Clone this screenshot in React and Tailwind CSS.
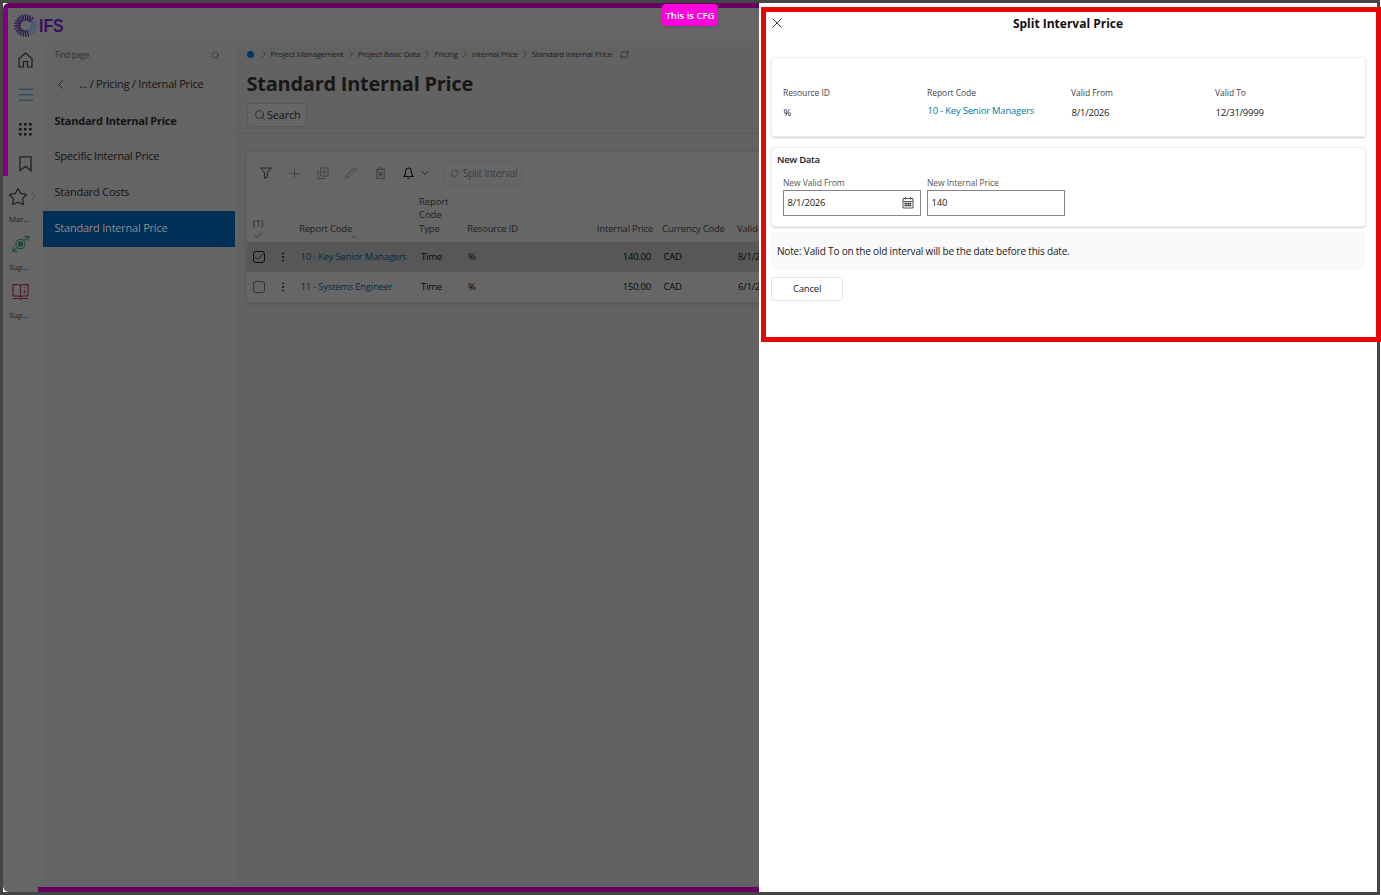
import React from "react";
import {
  Check,
  ChevronDown,
  ChevronLeft,
  ChevronRight,
  ChevronUp,
  EllipsisVertical,
  Pencil,
  Plus,
  RefreshCw,
  Search,
  Star,
  X,
} from "lucide-react";

const crumbs = [
  "Project Management",
  "Project Basic Data",
  "Pricing",
  "Internal Price",
  "Standard Internal Price",
];

const rows = [
  { code: "10 - Key Senior Managers", type: "Time", resource: "%", price: "140.00", currency: "CAD", valid: "8/1/2", checked: true },
  { code: "11 - Systems Engineer", type: "Time", resource: "%", price: "150.00", currency: "CAD", valid: "6/1/2", checked: false },
];

const details = [
  { label: "Resource ID", value: "%" },
  { label: "Report Code", value: "10 - Key Senior Managers", link: true },
  { label: "Valid From", value: "8/1/2026" },
  { label: "Valid To", value: "12/31/9999" },
];

const rays = Array.from({ length: 24 }, (_, i) => i * 15);

function Logo() {
  return (
    <div className="flex h-[33px] items-center pt-[1px] pl-[6px]">
      <svg width="23" height="23" viewBox="0 0 24 24" fill="none">
        {rays.map((deg) => (
          <path
            key={deg}
            d="M12 6.8 Q12.8 4 11.2 0.2"
            stroke={deg > 50 && deg < 160 ? "#41567f" : "#2e1553"}
            strokeWidth="1.4"
            transform={`rotate(${deg} 12 12)`}
          />
        ))}
      </svg>
      <span className="ml-[1.5px] origin-left scale-x-[.83] pt-[1px] font-['Liberation_Sans',sans-serif] text-[19px] leading-none font-bold text-[#3a1060]">
        IFS
      </span>
    </div>
  );
}

function HomeIcon() {
  return (
    <svg width="15" height="16" viewBox="0 0 15 16" fill="none" stroke="#1c1c1c" strokeWidth="1.2">
      <path d="M1 6.5 7.5 1 14 6.5V15H9.5V9.5H5.5V15H1Z" />
    </svg>
  );
}

function MenuIcon() {
  return (
    <svg width="14" height="13" viewBox="0 0 14 13" fill="#2a4d68">
      <rect y="0.6" width="14" height="1.4" />
      <rect y="6" width="14" height="1.4" />
      <rect y="11.6" width="14" height="1.4" />
    </svg>
  );
}

function GridIcon() {
  const dots = [0, 5, 10];
  return (
    <svg width="13" height="13" viewBox="0 0 13 13" fill="#151515">
      {dots.map((y) => dots.map((x) => <rect key={`${x}-${y}`} x={x} y={y} width="2.6" height="2.6" rx="0.6" />))}
    </svg>
  );
}

function BookmarkIcon() {
  return (
    <svg width="13" height="16" viewBox="0 0 13 16" fill="none" stroke="#1c1c1c" strokeWidth="1.2">
      <path d="M1 .8h11v14L6.5 10.3 1 14.8Z" />
    </svg>
  );
}

function TargetIcon() {
  return (
    <svg width="18" height="18" viewBox="0 0 18 18" fill="none" stroke="#1d4a35" strokeWidth="1.1">
      <circle cx="8.5" cy="9" r="4.6" />
      <circle cx="8.5" cy="9" r="2.1" fill="#1d4a35" />
      <path d="M12 5.5 16.5 1.5M12 1.5h4.5V6M5 12.5 1 16.5M1 12v4.5h4.5" />
    </svg>
  );
}

function GuideIcon() {
  return (
    <svg width="17" height="17" viewBox="0 0 17 17" fill="none" stroke="#50142b" strokeWidth="1.1">
      <path d="M8.5 2.5C7.5 1.5 6 1.5 1 1.5V13h6l1.5 1 1.5-1h6V1.5C11 1.5 9.5 1.5 8.5 2.5V13M1 15.5h6l1.5.8 1.5-.8h6M12.3 6.5V10.5M12.3 4v1" />
    </svg>
  );
}

function FilterIcon() {
  return (
    <svg width="12" height="12" viewBox="0 0 12 12" fill="none" stroke="#1c1c1c" strokeWidth=".9">
      <path d="M.8 1h10.4L7.4 6v4L4.6 11.3V6Z" />
    </svg>
  );
}

function DuplicateIcon() {
  return (
    <svg width="12" height="12" viewBox="0 0 12 12" fill="none" stroke="currentColor" strokeWidth=".8" className="ml-[15px]">
      <path d="M3.5 1h7.5v8H3.5ZM1 3v8.5h8M7.25 3v4M5.3 5h3.9" />
    </svg>
  );
}

function TrashIcon() {
  return (
    <svg width="11" height="12" viewBox="0 0 11 12" fill="none" stroke="currentColor" strokeWidth=".8" className="ml-[18px]">
      <path d="M.5 2.5h10M3.5 2.5V1h4v1.5M1.7 2.5v9h7.6v-9M4 4.5v5M5.5 4.5v5M7 4.5v5" />
    </svg>
  );
}

function BellIcon() {
  return (
    <svg width="11" height="12" viewBox="0 0 11 12" fill="none" stroke="#101010" strokeWidth="1.1" className="ml-[17px]">
      <path d="M1 9.5C2.5 8 2.7 6.5 2.7 4.2 2.7 2 3.8 1 5.5 1S8.3 2 8.3 4.2C8.3 6.5 8.5 8 10 9.5ZM4.3 11.3h2.4" />
    </svg>
  );
}

function CalendarIcon() {
  return (
    <svg width="12" height="12" viewBox="0 0 12 12" fill="none" stroke="#555" strokeWidth="1">
      <path d="M1 1.5h10v9.5H1ZM1 4.5h10M3.5 0v2.5M8.5 0v2.5" />
      <path d="M2.5 6.5h7M2.5 8.5h7" strokeDasharray="1.4 .3" strokeWidth="1.6" stroke="#222" />
    </svg>
  );
}

function Rail() {
  return (
    <div className="flex w-[35px] shrink-0 flex-col pt-[1px]">
      <div className="flex h-[35px] items-center justify-center"><HomeIcon /></div>
      <div className="flex h-[35px] items-center justify-center"><MenuIcon /></div>
      <div className="flex h-[34px] items-center justify-center"><GridIcon /></div>
      <div className="flex h-[35px] items-center justify-center"><BookmarkIcon /></div>
      <div className="flex h-[28px] items-center pt-[3px]">
        <Star size={20} strokeWidth={1.4} color="#1c1c1c" className="shrink-0" />
        <ChevronRight size={13} strokeWidth={1.2} color="#333" className="-ml-[1px] shrink-0" />
      </div>
      <span className="mt-[3px] ml-[1px] text-[8px] leading-[14px] tracking-[-0.1px] text-[#1c1c1c]">Mar...</span>
      <div className="mt-[9px] ml-[4px] h-[18px]"><TargetIcon /></div>
      <span className="mt-[7px] ml-[1px] text-[8px] leading-[14px] tracking-[-0.1px] text-[#1c1c1c]">Sup...</span>
      <div className="mt-[9px] ml-[4px] h-[18px]"><GuideIcon /></div>
      <span className="mt-[7px] ml-[1px] text-[8px] leading-[14px] tracking-[-0.1px] text-[#1c1c1c]">Sup...</span>
    </div>
  );
}

function Sidebar() {
  return (
    <div className="w-[192px] shrink-0 bg-[#646464] pt-[1px] text-[11px] tracking-[-0.22px] text-[#141414]">
      <div className="flex h-[25px] items-center justify-between pt-[1px] pr-[15px] pl-[12px] text-[8.5px] text-[#333]">
        <span className="tracking-[-0.5px]">Find page</span>
        <Search size={9} strokeWidth={1.8} />
      </div>
      <div className="flex h-[34px] items-center pl-[10px]">
        <ChevronLeft size={15} strokeWidth={1.4} />
        <span className="ml-[11px]">... / Pricing / Internal Price</span>
      </div>
      <div className="flex h-[38px] items-center pt-[2px] pl-[11.5px] font-bold tracking-[-0.25px]">Standard Internal Price</div>
      <div className="flex h-[34px] items-center pl-[11.5px]">Specific Internal Price</div>
      <div className="flex h-[38px] items-center pl-[11.5px]">Standard Costs</div>
      <div className="flex h-[36px] items-center bg-[#002f57] pb-[2px] pl-[11.5px] text-[#8d8d8d]">Standard Internal Price</div>
    </div>
  );
}

function Toolbar() {
  return (
    <div className="flex h-[42px] items-center pl-[13px] text-[#393939]">
      <FilterIcon />
      <Plus size={15} strokeWidth={1.1} className="ml-[15px]" />
      <DuplicateIcon />
      <Pencil size={12} strokeWidth={1.4} className="ml-[16px]" />
      <TrashIcon />
      <BellIcon />
      <ChevronDown size={12} strokeWidth={1.6} color="#101010" className="ml-[5px]" />
      <div className="ml-[12px] flex h-[24px] w-[79px] items-center gap-[4px] rounded-sm border border-[#606060] pl-[6px] text-[10px] tracking-[-0.28px] whitespace-nowrap text-[#3c3c3c]">
        <RefreshCw size={9} strokeWidth={1.5} />
        Split Interval
      </div>
    </div>
  );
}

function PriceTable() {
  return (
    <div className="rounded-l border-y border-l border-[#5e5e5e] bg-[#666] shadow-sm">
      <Toolbar />
      <div className="flex h-[48px] items-end pb-[7px] text-[9.5px] leading-[13.5px] tracking-[-0.2px] whitespace-nowrap text-[#1f1f1f]">
        <div className="-mb-[6px] w-[52px] pl-[6px] text-[9px] leading-[12px]">
          (1)
          <Check size={11} strokeWidth={1.3} />
        </div>
        <div className="relative w-[120px]">
          Report Code
          <ChevronUp size={10} strokeWidth={1.5} className="absolute -bottom-[7px] left-[50px]" />
        </div>
        <div className="w-[48px] tracking-[-0.1px]">Report<br />Code<br />Type</div>
        <div className="w-[96px]">Resource ID</div>
        <div className="w-[90px] text-right">Internal Price</div>
        <div className="w-[75px] pl-[9px]">Currency Code</div>
        <div className="pl-[9px]">Valid</div>
      </div>
      {rows.map((row) => (
        <div
          key={row.code}
          className={`flex h-[30px] items-center text-[9.5px] tracking-[-0.24px] whitespace-nowrap text-[#080808] ${row.checked ? "bg-[#575757]" : ""}`}
        >
          <div className="flex w-[53.5px] shrink-0 items-center pl-[6px]">
            <div className={`flex h-[12px] w-[12px] items-center justify-center rounded-[3px] border ${row.checked ? "border-[#0c0c0c]" : "border-[#333]"}`}>
              {row.checked && <Check size={12} strokeWidth={1.5} className="shrink-0" />}
            </div>
            <EllipsisVertical size={12} strokeWidth={2} className="ml-[12px]" />
          </div>
          <div className="w-[120.5px] shrink-0 text-[#062b45]">{row.code}</div>
          <div className="w-[47px] shrink-0">{row.type}</div>
          <div className="w-[95px] shrink-0">{row.resource}</div>
          <div className="w-[88px] shrink-0 text-right">{row.price}</div>
          <div className="w-[87px] shrink-0 pl-[12.5px]">{row.currency}</div>
          <div>{row.valid}</div>
        </div>
      ))}
    </div>
  );
}

function Main() {
  return (
    <div className="min-w-0 flex-1 overflow-hidden bg-[#626262] pt-[1px]">
      <div className="flex h-[24px] items-center gap-[1px] pl-[12px] text-[8px] tracking-[-0.25px] whitespace-nowrap text-[#202020]">
        <div className="mr-[2.5px] h-[7px] w-[7px] rounded-full bg-[#003761]" />
        {crumbs.map((name) => (
          <React.Fragment key={name}>
            <ChevronRight size={12} strokeWidth={1.3} className="shrink-0" />
            <span>{name}</span>
          </React.Fragment>
        ))}
        <RefreshCw size={9} strokeWidth={1.6} className="ml-[7px]" />
      </div>
      <h1 className="flex h-[35px] items-center pl-[11.5px] text-[20px] font-bold tracking-[-0.25px] text-[#171717]">
        Standard Internal Price
      </h1>
      <div className="mt-[2px] ml-[12px] flex h-[24px] w-[60px] items-center gap-[1px] rounded-sm border border-[#595959] bg-[#666] pl-[6px] text-[11px] tracking-[-0.2px] text-[#171717]">
        <Search size={12} strokeWidth={1.4} />
        Search
      </div>
      <div className="mt-[6px] mb-[17px] h-px bg-[#5b5b5b]" />
      <div className="pl-[11px]"><PriceTable /></div>
    </div>
  );
}

function SplitPanel() {
  return (
    <div className="w-[618px] shrink-0 bg-white pl-[12px] text-[#202020]">
      <div className="flex h-[41px] items-center">
        <X size={16} strokeWidth={1.3} className="mt-[-2px] -ml-[2px]" />
        <h2 className="w-[566px] text-center text-[12px] font-bold text-[#111]">Split Interval Price</h2>
      </div>
      <div className="mt-[13px] flex h-[80px] w-[595px] rounded border border-[#eee] pt-[29px] pl-[11px] shadow-[0_1px_2px_rgba(0,0,0,0.2)]">
        {details.map((item) => (
          <div key={item.label} className="w-[144px]">
            <div className="text-[8.5px] leading-[12px] tracking-[-0.05px] text-[#444]">{item.label}</div>
            <div className={`pl-[0.5px] text-[9.5px] leading-[14px] tracking-[-0.22px] whitespace-nowrap ${item.link ? "mt-[5px] text-[#007ba8]" : "mt-[7px]"}`}>
              {item.value}
            </div>
          </div>
        ))}
      </div>
      <div className="mt-[10px] h-[80px] w-[595px] rounded border border-[#eee] pl-[5px] shadow-[0_1px_2px_rgba(0,0,0,0.2)]">
        <div className="pt-[5px] text-[9.5px] leading-[14px] font-semibold tracking-[-0.25px]">New Data</div>
        <div className="mt-[9px] flex gap-[6px] pl-[6px]">
          <div className="w-[138px]">
            <div className="text-[8.5px] leading-[14px] tracking-[-0.05px] text-[#555]">New Valid From</div>
            <div className="flex h-[26px] items-center justify-between border border-[#858585] pr-[6px] pl-[3.5px] text-[9.5px] tracking-[-0.22px]">
              8/1/2026
              <CalendarIcon />
            </div>
          </div>
          <div className="w-[138px]">
            <div className="text-[8.5px] leading-[14px] tracking-[-0.05px] text-[#555]">New Internal Price</div>
            <div className="flex h-[26px] items-center border border-[#858585] pl-[3.5px] text-[9.5px] tracking-[-0.22px]">140</div>
          </div>
        </div>
      </div>
      <div className="mt-[5px] flex h-[38px] w-[594px] items-center bg-[#fafafa] pl-[6px] text-[10px] tracking-[-0.18px]">
        Note: Valid To on the old interval will be the date before this date.
      </div>
      <div className="mt-[7px] flex h-[24px] w-[72px] items-center justify-center rounded-[3px] border border-[#e4e4e4] pt-[1px] text-[9.5px] tracking-[-0.2px]">
        Cancel
      </div>
    </div>
  );
}

export default function App() {
  return (
    <div className="relative h-[895px] w-[1381px] overflow-hidden bg-white font-['Open_Sans',sans-serif]">
      <div className="flex h-[895px] w-[1380px] border-[3px] border-[#454545] bg-white">
        <div className="relative flex w-[756px] shrink-0 flex-col overflow-hidden rounded-tl-[6px] rounded-bl-[6px] border-t-[5px] border-[#650060] bg-[#666] pl-[5px]">
          <Logo />
          <div className="flex min-h-0 flex-1">
            <Rail />
            <Sidebar />
            <Main />
          </div>
          {/* environment marker strips */}
          <div className="absolute top-0 left-0 h-[168px] w-[5px] bg-[#850080]" />
          <div className="absolute bottom-0 left-[35px] h-[5px] w-[721px] bg-[#650060]" />
        </div>
        <SplitPanel />
      </div>
      <div className="absolute top-[4px] left-[662px] flex h-[22px] w-[56px] items-center justify-center rounded bg-[#ff00dc] pt-[2px] text-[9.5px] font-semibold tracking-[0.02px] whitespace-nowrap text-white shadow">
        This is CFG
      </div>
      <div className="absolute top-[7px] left-[761px] h-[335px] w-[620px] border-[5px] border-[#e80707]" />
    </div>
  );
}
